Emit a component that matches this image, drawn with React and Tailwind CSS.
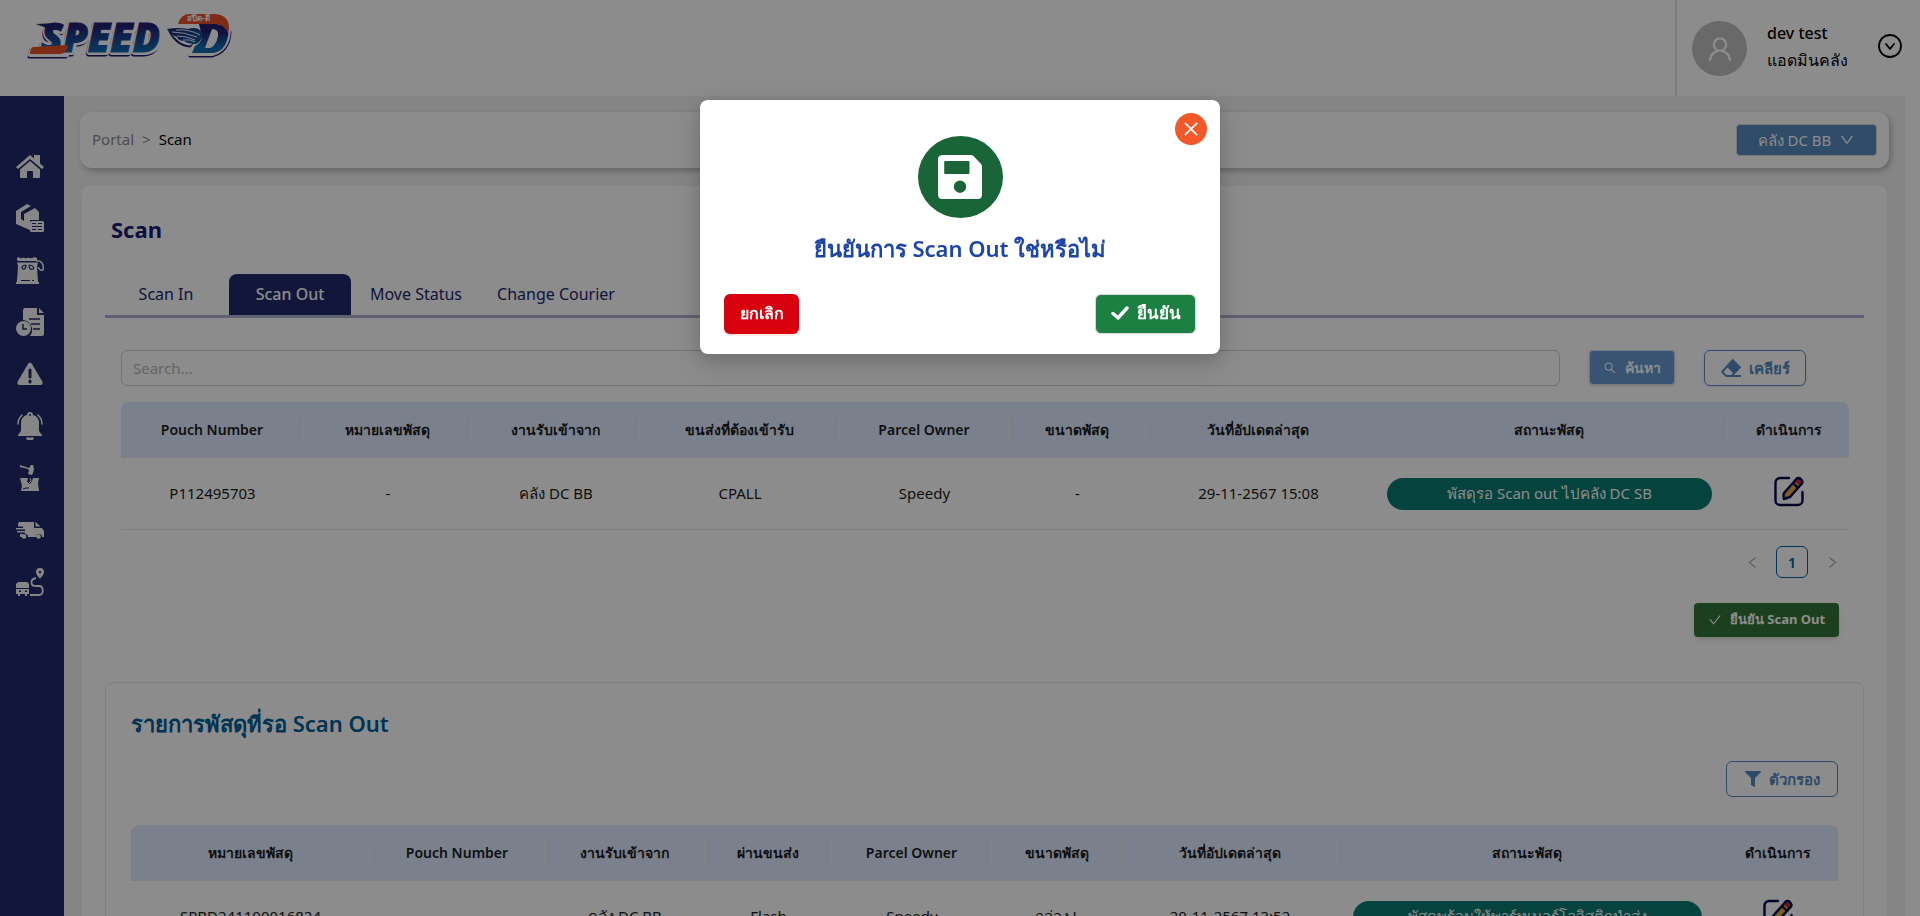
import { AiOutlineUser, AiOutlineDown, AiOutlineSearch, AiOutlineCheck, AiOutlineClose, AiOutlineLeft, AiOutlineRight } from "react-icons/ai";
import { FaFilter } from "react-icons/fa";

function Logo() {
  const common = { fontFamily: '"Open Sans", sans-serif', fontWeight: 800, fontStyle: "italic" };
  return (
    <svg viewBox="0 0 220 56" className="h-14 w-[220px]" role="img" aria-label="Speed-D">
      <defs>
        <linearGradient id="ink" x1="0" y1="0" x2="0" y2="1">
          <stop offset="0.3" stopColor="#22206f" />
          <stop offset="0.8" stopColor="#0f6cb0" />
        </linearGradient>
        <linearGradient id="wing" x1="0" y1="0" x2="1" y2="1">
          <stop offset="0" stopColor="#22206f" />
          <stop offset="1" stopColor="#0c62a6" />
        </linearGradient>
      </defs>
      <g strokeLinejoin="round">
        <g stroke="#22206f" fill="#22206f">
          <text x="21" y="46" fontSize="40" strokeWidth="5" {...common}>SPEED</text>
          <path d="M11 41 L49 41 L46 49 L9 49Z" strokeWidth="3" />
          <path d="M170 48 L192 48 Q209 44 210 24 L204 10 L190 20Z" strokeWidth="3" />
          <path d="M150 23 Q157 37 170 38 L180 24Z" strokeWidth="3" />
        </g>
        <g stroke="#fff" fill="#fff">
          <text x="22" y="44" fontSize="40" strokeWidth="6" {...common}>SPEED</text>
          <path d="M12 39 L50 39 L47 47 L10 47Z" strokeWidth="4" />
          <path d="M170 46 L192 46 Q208 42 209 22 L204 8 L160 8 L184 20Z" strokeWidth="4" />
          <path d="M150 20 Q158 35 170 36 L182 24Z" strokeWidth="3" />
        </g>
      </g>
      <text x="21" y="44" fontSize="40" fill="url(#ink)" stroke="url(#ink)" strokeWidth="1" {...common}>SPEED</text>
      <path d="M16 16 L36 15 L31 23 L24 19Z" fill="#22206f" />
      <path d="M13 39 L48 37 Q47 46 40 46 L10 46Q10 40 13 39Z" fill="#e8502a" />
      <path fillRule="evenodd" fill="url(#ink)" d="M179 16 L197 16 Q210 18 208 28 Q205 45 191 45 L172 45 L175 38Q180 36 182 30L180 20Z M192 21 L185 40 L190 40 Q196 38 198 28 Q199 21 192 21Z" />
      <path d="M158 16 Q161 6 169 6 L195 6 Q209 7 209 20 L208 26 Q205 16 196 16Z" fill="#e8502a" />
      <path d="M147 21 Q158 19 168 21 Q177 18 182 24 Q184 32 176 36 Q168 36 164 33 Q158 33 157 29 Q151 27 147 21Z" fill="url(#wing)" />
      <path d="M152 24 Q164 24 177 29 M157 28 Q166 28 175 32 M156 22 Q170 21 180 27 M163 32 Q170 31 175 34" fill="none" stroke="#fff" strokeWidth="0.9" />
      <text x="167" y="13" fontSize="8" fontWeight="700" fill="#fff" fontFamily='"Noto Sans", sans-serif'>สปีด-ดี</text>
    </svg>
  );
}

const menu = [
  {
    name: "หน้าแรก",
    art: (
      <>
        <path d="M0 15 14 3l4 3.500V3h6v8.500L28 15l-2 2L14 7 2 17z" />
        <path d="M14 9 4 17.500V25a1 1 0 0 0 1 1h6v-6a1 1 0 0 1 1-1h4a1 1 0 0 1 1 1v6h6a1 1 0 0 0 1-1v-7.500z" />
      </>
    ),
  },
  {
    name: "พัสดุ",
    art: (
      <>
        <path d="M0 7 11 0l4 2L5 8v7l3 2V10l11-6 4 4v8H14v10L0 20z" />
        <path fillRule="evenodd" d="M15.500 17h11a1.500 1.500 0 0 1 1.500 1.500v8a1.500 1.500 0 0 1-1.500 1.500h-11a1.500 1.500 0 0 1-1.500-1.500v-8a1.500 1.500 0 0 1 1.500-1.500zM16 19v1h4v-1zm6 0v1h4v-1zm-6 3v1h10v-1zm0 3v1h4v-1zm6 0v1h4v-1z" />
      </>
    ),
  },
  {
    name: "ถุงพัสดุ",
    art: (
      <>
        <path d="M1 2c2-2 3 1 5 0s3 1 5 0 3 1 5 0 4-1 5 0v2l-1 1H2L1 4zM1 6.500h21l-1 4 1 15 1 1V28H0v-1.500l1-1L2 10z" />
        <path d="M20 5c6-1 8 4 7 9-3 1-4-1-5-3" fill="none" stroke="currentColor" strokeWidth="1.500" />
        <path d="M10 9c-4 0-5 3-3 4s3-2 3-4M13 9c0 4 2 5 4 4s-1-4-4-4M5 24.500h9M16 24.500h2" fill="none" stroke="#1f286a" strokeWidth="1.200" />
      </>
    ),
  },
  {
    name: "ประวัติ",
    art: (
      <>
        <path d="M8 0h13v7h7v19a2 2 0 0 1-2 2H14c5-6 1-15-7-16V2zM23 0l5 5h-5z" />
        <path d="M13 11h11M15 16h9M17 21h7" stroke="#1f286a" strokeWidth="1.500" />
        <circle cx="7.500" cy="20.500" r="7.500" />
        <path d="M7 16v5h4" fill="none" stroke="#1f286a" strokeWidth="1.500" />
      </>
    ),
  },
  {
    name: "แจ้งเตือน",
    art: (
      <>
        <path d="M12 4q2-3 4 0l10 17q2 4-2 4H4q-4 0-2-4z" />
        <path d="M14 10v7M14 21v1" stroke="#1f286a" strokeWidth="3" strokeLinecap="round" />
      </>
    ),
  },
  {
    name: "กระดิ่ง",
    art: (
      <>
        <path fillRule="evenodd" d="M14 0a3 3 0 0 1 3 3c4 1 6 4 6 8v8l3 4v1H2v-1l3-4v-8c0-4 2-7 6-8a3 3 0 0 1 3-3zm0 2a1 1 0 0 0 0 2 1 1 0 0 0 0-2zM10 25.500h8a4 3 0 0 1-8 0z" />
        <path d="M6 3Q2 7 2 12M22 3q4 4 4 9" fill="none" stroke="currentColor" strokeWidth="1.500" strokeLinecap="round" />
      </>
    ),
  },
  {
    name: "พัสดุเสียหาย",
    art: (
      <>
        <path d="M4 1l9 3 2-3h2l1 4-1 4-1 2-4-1 1-3-1-2-8-2zM4 14h8l-1 4 3 2 2-3 1-3h6l-1 5 1 8H5l1-5z" />
        <path d="M7 25l3-1 3 0" fill="none" stroke="#1f286a" />
        <path d="M14 14l1 3-2 2" fill="none" stroke="currentColor" />
      </>
    ),
  },
  {
    name: "รถขนส่ง",
    art: (
      <>
        <path d="M3 6h15v6h8l2 3v6h-2a3 3 0 0 0-6 0h-8a3 3 0 0 0-6 0H4v-3h5v-1.500H1V15h8v-1.500H0V12h7v-1.500H2V8zM19.500 6l5 4.500h-5z" />
        <circle cx="8" cy="20.500" r="2.300" />
        <circle cx="22.500" cy="20.500" r="2.300" />
      </>
    ),
  },
  {
    name: "เส้นทาง",
    art: (
      <>
        <path fillRule="evenodd" d="M2 14h9l2 2v4H0v-4zM0 21h13v5h-2v2H9v-2H4v2H2v-2H0zm3 1.500v1.500h2v-1.500zm6 0v1.500h2v-1.500z" />
        <path fillRule="evenodd" d="M24 0a4 4 0 0 1 4 4c0 3-3 5-4 7-1-2-4-4-4-7a4 4 0 0 1 4-4zm0 2.700a1.300 1.300 0 0 0 0 2.600 1.300 1.300 0 0 0 0-2.600z" />
        <path d="M20 10c-6 1-6 8 0 8h3c5 0 5 9 0 9h-9" fill="none" stroke="currentColor" strokeWidth="1.800" />
      </>
    ),
  },
];

function EditIcon() {
  return (
    <svg viewBox="0 0 30 32" className="h-8 w-[30px]" fill="none" stroke="#00094b" strokeWidth="2.400" strokeLinecap="round" strokeLinejoin="round" aria-hidden="true">
      <path d="M15 2H6a4.500 4.500 0 0 0-4.500 4.500v18A4.500 4.500 0 0 0 6 29h18a4.500 4.500 0 0 0 4.500-4.500V16" />
      <path d="M10 17 22 3.500q2.500-3 5 0 2.500 2.500 0 5L16 21l-6 2q-1-3 0-6z" fill="#eaa63f" />
      <path d="M21 6l2-2q2-2 3.500 0 1.500 2-.5 4L25 9z" fill="#d6213f" stroke="none" />
      <path d="M19 7l5 5M22 3.500q2.500-3 5 0 2.500 2.500 0 5" />
    </svg>
  );
}

function ParcelTable({ label, widths, heads, row }) {
  const last = heads.length - 1;
  return (
    <table className="w-full table-fixed border-separate border-spacing-0 text-center" aria-label={label}>
      <colgroup>
        {widths.map((w, i) => (
          <col key={i} style={{ width: w }} />
        ))}
      </colgroup>
      <thead>
        <tr className="h-14">
          {heads.map((h, i) => (
            <th key={h} scope="col" className={`border-b border-[#e9e9ee] bg-[#dee9ff] p-0 text-sm font-semibold ${i === 0 ? "rounded-tl-lg" : ""} ${i === last ? "rounded-tr-lg" : ""}`}>
              <div className={`flex h-6 items-center justify-center ${i === last ? "" : "border-r border-[#f0f0f0]"}`}>{h}</div>
            </th>
          ))}
        </tr>
      </thead>
      <tbody>
        <tr className="h-[72px] text-[15px]">
          {row.map((c, i) => (
            <td key={i} className="border-b border-[#e8e8e8] p-0">
              {i === last - 1 ? (
                <span className="mx-4 flex h-8 items-center justify-center rounded-full bg-[#0a7b71] text-white">{c}</span>
              ) : i === last ? (
                <button type="button" aria-label="แก้ไข" className="mb-1 align-middle">
                  <EditIcon />
                </button>
              ) : (
                c
              )}
            </td>
          ))}
        </tr>
      </tbody>
    </table>
  );
}

export default function App() {
  return (
    <div className="flex h-screen flex-col overflow-hidden bg-white pr-[15px] font-['Noto_Sans',sans-serif] text-[#1c1c1c]">
      <header className="flex h-24 shrink-0 justify-between">
        <a href="#home" className="pt-2 pl-5">
          <Logo />
        </a>
        <div className="flex items-start border-l-2 border-[#e2e2e2] pt-[21px] pr-[3px] pl-[15px]">
          <div className="flex h-[55px] w-[55px] items-center justify-center rounded-full bg-[#bfbfbf] text-white">
            <AiOutlineUser size={30} />
          </div>
          <div className="-mt-px ml-5 w-[111px] text-base leading-[27px] font-medium text-black">
            <p>dev test</p>
            <p>แอดมินคลัง</p>
          </div>
          <button type="button" aria-label="เมนูผู้ใช้" className="mt-[13px] text-black">
            <svg viewBox="0 0 24 24" className="h-6 w-6" fill="none" stroke="currentColor" strokeWidth="1.800" strokeLinecap="round" strokeLinejoin="round">
              <circle cx="12" cy="12" r="11" />
              <path d="M8 10l4 5 4-5" />
            </svg>
          </button>
        </div>
      </header>

      <div className="flex min-h-0 flex-1">
        <nav aria-label="เมนูหลัก" className="flex w-16 shrink-0 flex-col gap-6 bg-[#1f286a] pt-14 pl-4 text-[#f4f4f4]">
          {menu.map((m) => (
            <a key={m.name} href="#menu" aria-label={m.name} className="h-7 w-7">
              <svg viewBox="0 0 28 28" className="h-7 w-7" fill="currentColor">
                {m.art}
              </svg>
            </a>
          ))}
        </nav>

        <main className="min-w-0 flex-1 overflow-hidden bg-[#f3f3f3] px-4 pt-4">
          <div className="flex h-14 items-center justify-between rounded-xl bg-white pr-3 pl-3 shadow-[2px_3px_6px_rgba(0,0,0,0.25)]">
            <nav aria-label="เส้นทางหน้า" className="flex gap-2 pb-0.5 text-[15px]">
              <a href="#portal" className="text-[#8c8c8c]">Portal</a>
              <span className="text-[#8c8c8c]">&gt;</span>
              <span className="text-black">Scan</span>
            </nav>
            <button type="button" className="flex h-8 w-[141px] items-center justify-center gap-2 rounded border border-[#d9d9d9] bg-[#578abf] text-[15px] text-white">
              คลัง DC BB
              <AiOutlineDown size={16} />
            </button>
          </div>

          <section className="mx-px mt-[17px] rounded-lg border border-[#f0f0f0] bg-white px-[23px] pt-7 pb-10">
            <h1 className="-mt-px mb-px pl-1.5 text-[22px] leading-8 font-bold text-[#1b1b75]">Scan</h1>

            <div role="tablist" className="mt-[29px] flex border-b-[3px] border-[#adb0d0] text-base text-[#22266b]">
              <button type="button" role="tab" className="mr-[2px] h-[41px] w-[122px] pb-0.5">Scan In</button>
              <button type="button" role="tab" aria-selected="true" className="h-[41px] w-[122px] rounded-t-lg bg-[#1f286a] pb-0.5 font-medium text-white">Scan Out</button>
              <button type="button" role="tab" className="h-[41px] w-[130px] pb-0.5">Move Status</button>
              <button type="button" role="tab" className="h-[41px] w-[150px] pb-0.5">Change Courier</button>
            </div>

            <div className="mx-4 mt-8 mb-4 flex gap-[29px] pr-[42px]">
              <input type="text" aria-label="Search" placeholder="Search..." className="h-9 min-w-0 flex-1 rounded-md border border-[#cfcfcf] px-[11px] text-[15px] placeholder:text-[#b8b8b8]" />
              <button type="button" className="flex h-[35px] w-[86px] items-center justify-center gap-2 rounded border border-[#d0dceb] bg-[#669ad0] text-sm font-bold text-white shadow">
                <AiOutlineSearch size={14} />
                ค้นหา
              </button>
              <button type="button" className="flex h-9 w-[102px] items-center justify-center gap-2 rounded-md border border-[#5a8fc6] text-[15px] font-bold text-[#5589c0] shadow-sm">
                <svg viewBox="0 0 20 18" className="h-[18px] w-5" fill="currentColor" aria-hidden="true">
                  <path fillRule="evenodd" d="M12.500.5 19.500 7.500q.8.8 0 1.600L13 16h7v2H5L.7 13.700q-1-1 0-2L11 .5q.8-.8 1.500 0zM6.500 8.500 2.500 12.700 5.700 16H10l2-2z" />
                </svg>
                เคลียร์
              </button>
            </div>

            <div className="mx-4">
              <ParcelTable
                label="Scan Out"
                widths={[183, 168, 168, 200, 169, 137, 225, 357, 121]}
                heads={["Pouch Number", "หมายเลขพัสดุ", "งานรับเข้าจาก", "ขนส่งที่ต้องเข้ารับ", "Parcel Owner", "ขนาดพัสดุ", "วันที่อัปเดตล่าสุด", "สถานะพัสดุ", "ดำเนินการ"]}
                row={["P112495703", "-", "คลัง DC BB", "CPALL", "Speedy", "-", "29-11-2567 15:08", "พัสดุรอ Scan out ไปคลัง DC SB", ""]}
              />
              <div className="mt-4 flex justify-end gap-2">
                <button type="button" disabled aria-label="หน้าก่อนหน้า" className="flex h-8 w-8 items-center justify-center text-[#a9a9a9]">
                  <AiOutlineLeft size={15} />
                </button>
                <button type="button" className="h-8 w-8 rounded-md border border-[#005f9b] text-[15px] font-semibold text-[#005f9b]">1</button>
                <button type="button" disabled aria-label="หน้าถัดไป" className="flex h-8 w-8 items-center justify-center text-[#a9a9a9]">
                  <AiOutlineRight size={15} />
                </button>
              </div>
            </div>

            <div className="mt-[25px] flex justify-end pr-[25px]">
              <button type="button" className="flex h-[34px] w-[145px] items-center justify-center gap-2 rounded bg-[#337539] text-[13px] font-bold whitespace-nowrap text-white shadow-md">
                <AiOutlineCheck size={14} />
                ยืนยัน Scan Out
              </button>
            </div>

            <section className="mt-[45px] rounded-lg border border-[#e8e8e8] px-[25px] pt-6 pb-6">
              <h2 className="text-[22px] leading-8 font-semibold text-[#005f9b]">รายการพัสดุที่รอ Scan Out</h2>
              <div className="mt-[22px] mb-7 flex justify-end">
                <button type="button" className="flex h-9 w-[112px] items-center justify-center gap-2 rounded-md border border-[#5a8fc6] text-[15px] font-bold text-[#5589c0]">
                  <FaFilter size={16} />
                  ตัวกรอง
                </button>
              </div>
              <ParcelTable
                label="รายการพัสดุที่รอ Scan Out"
                widths={[239, 175, 160, 127, 160, 131, 214, 381, 120]}
                heads={["หมายเลขพัสดุ", "Pouch Number", "งานรับเข้าจาก", "ผ่านขนส่ง", "Parcel Owner", "ขนาดพัสดุ", "วันที่อัปเดตล่าสุด", "สถานะพัสดุ", "ดำเนินการ"]}
                row={["SPBD241100016824", "", "คลัง DC BB", "Flash", "Speedy", "กล่อง L", "20-11-2567 13:52", "พัสดุพร้อมให้พาร์ทเนอร์โลจิสติกนำส่ง", ""]}
              />
            </section>
          </section>
        </main>
      </div>

      <div className="fixed inset-0 flex items-start justify-center bg-black/45 pt-[100px]">
        <div role="dialog" aria-modal="true" aria-labelledby="confirm-title" className="relative w-[520px] rounded-lg bg-white px-6 pt-9 pb-5 shadow-[0_6px_16px_rgba(0,0,0,0.12),0_9px_28px_8px_rgba(0,0,0,0.1)]">
          <button type="button" aria-label="ปิด" className="absolute top-[13px] right-[13px] flex h-8 w-8 items-center justify-center rounded-full bg-[#f25829] text-white">
            <AiOutlineClose size={20} />
          </button>
          <div className="mx-auto flex h-[82px] w-[85px] items-center justify-center rounded-[50%] bg-[#1a6537]">
            <svg viewBox="0 0 44 44" className="h-11 w-11" fill="#fff" aria-hidden="true">
              <path fillRule="evenodd" d="M4.500 0H33q1.500 0 2.500 1l7.500 8q1 1 1 2.500V39.500q0 4.500-4.500 4.500h-35Q0 44 0 39.500v-35Q0 0 4.500 0zM7.200 6a1 1 0 0 0-1 1v11a1 1 0 0 0 1 1H30.500a1 1 0 0 0 1-1V7a1 1 0 0 0-1-1zM22 25.500a6.200 6.200 0 1 0 0 12.400 6.200 6.200 0 0 0 0-12.400z" />
            </svg>
          </div>
          <h2 id="confirm-title" className="mt-3 text-center text-[22px] leading-9 font-semibold text-[#1c45ab]">ยืนยันการ Scan Out ใช่หรือไม่</h2>
          <div className="mt-7 flex items-center justify-between">
            <button type="button" className="h-10 w-[75px] rounded-md bg-[#d9000d] pb-0.5 text-base font-bold text-white shadow-[0_2px_0_rgba(255,38,5,0.1)]">ยกเลิก</button>
            <button type="button" className="flex h-10 w-[101px] items-center justify-center gap-2 rounded-md border border-[#d9d9d9] bg-[#1c8043] pb-0.5 text-[17px] font-bold text-white">
              <svg viewBox="0 0 18 14" className="h-3.5 w-[18px]" fill="none" stroke="currentColor" strokeWidth="3.400" strokeLinecap="round" strokeLinejoin="round" aria-hidden="true">
                <path d="M2 7.500 7 12 16 2" />
              </svg>
              ยืนยัน
            </button>
          </div>
        </div>
      </div>
    </div>
  );
}
